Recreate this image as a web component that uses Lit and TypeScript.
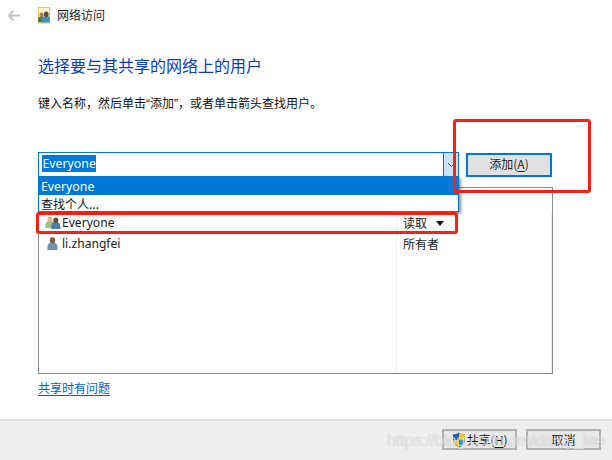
import { LitElement, html, css, svg } from "lit";
import { customElement } from "lit/decorators.js";

const person = (x: number, y: number, s: number, body: string, head: string) => svg`
  <g transform="translate(${x} ${y}) scale(${s})">
    <path d="M-4.6 11v-3c0-2.6 2-3.9 4.6-3.9s4.6 1.3 4.6 3.9v3z" fill="${body}"/>
    <ellipse cx="0" cy="2.3" rx="2.5" ry="2.9" fill="${head}"/>
  </g>`;

@customElement("app-root")
export class AppRoot extends LitElement {
  static styles = css`
    :host {
      display: flex;
      flex-direction: column;
      position: relative;
      width: 612px;
      height: 460px;
      overflow: hidden;
      background: #fff;
      font-family: "Noto Sans CJK SC", "Liberation Sans", sans-serif;
      font-size: 12px;
      color: #1a1a1a;
    }
    svg { display: block; flex: none; }
    .main { flex: 1; padding: 0 59px 0 38px; display: flex; flex-direction: column; }
    .titlebar { height: 30px; display: flex; align-items: center; margin-left: -30px; }
    .back { margin-right: 18px; }
    .ticon { margin-right: 7px; }
    .ttext { line-height: 16px; }
    h1 { margin: 25px 0 0; font-size: 16px; font-weight: 400; line-height: 20px; color: #0a3cc0; }
    .hint { margin-top: 19px; line-height: 18px; color: #111; white-space: nowrap; }
    .q { font-family: "Liberation Sans", sans-serif; }
    .row { margin-top: 39px; display: flex; gap: 7px; height: 25px; }
    .combo {
      position: relative;
      width: 421px;
      height: 25px;
      box-sizing: border-box;
      border: 1px solid #0078d7;
      background: #fff;
      display: flex;
      align-items: center;
    }
    .sel {
      margin: 0 0 2px 3px;
      background: #0078d7;
      color: #fff;
      font-family: "Noto Sans", "Liberation Sans", sans-serif;
      font-size: 12.3px;
      line-height: 17px;
      padding: 0 0.5px;
    }
    .arrow {
      margin-left: auto;
      width: 15px;
      height: 23px;
      box-sizing: border-box;
      border-left: 1px solid #0078d7;
      background: #cce4f7;
      display: flex;
      align-items: center;
      justify-content: center;
    }
    .drop {
      position: absolute;
      left: -1px;
      top: 23px;
      width: 421px;
      height: 36px;
      box-sizing: border-box;
      background: #fff;
      border: 1px solid #0078d7;
      border-top: none;
      box-shadow: 2px 2px 3px rgba(0, 0, 0, 0.45);
      z-index: 2;
    }
    .opt { height: 17px; line-height: 17px; padding-left: 2px; color: #111; }
    .opt.on {
      background: #0078d7;
      color: #fff;
      font-family: "Noto Sans", "Liberation Sans", sans-serif;
      font-size: 12.3px;
      height: 19px;
      line-height: 21px;
    }
    .btn-add {
      width: 86px;
      height: 24px;
      box-sizing: border-box;
      margin-top: 1px;
      padding-bottom: 2px;
      border: 2px solid #0078d7;
      background: #e1e1e1;
      display: flex;
      align-items: center;
      justify-content: center;
      line-height: 16px;
      color: #222;
    }
    u { text-underline-offset: 2px; }
    .list {
      margin-top: 10px;
      width: 515px;
      height: 187px;
      box-sizing: border-box;
      border: 1px solid #8b8f94;
      display: grid;
      grid-template-columns: 357px 1fr;
      grid-template-rows: 25px 20px 21px;
      align-content: start;
      position: relative;
    }
    .list::after {
      content: "";
      position: absolute;
      left: 357px;
      top: 26px;
      bottom: 0;
      width: 154px;
      border-left: 1px solid #eaf1fa;
      border-right: 1px solid #e6eefa;
      pointer-events: none;
    }
    .name {
      display: flex;
      align-items: center;
      gap: 1px;
      padding-left: 6px;
      font-family: "Noto Sans", "Liberation Sans", sans-serif;
      font-size: 12.1px;
      line-height: 20px;
      color: #1a1a1a;
    }
    .name.single { padding-left: 8px; gap: 4px; }
    .perm { display: flex; align-items: center; padding-left: 7px; line-height: 20px; }
    .caret {
      margin-left: 9px;
      width: 0;
      height: 0;
      border-left: 4.5px solid transparent;
      border-right: 4.5px solid transparent;
      border-top: 5px solid #111;
    }
    .link { margin-top: 5px; line-height: 17px; color: #0066cc; text-decoration: underline; text-underline-offset: 2px; width: fit-content; }
    .footer {
      height: 41px;
      box-sizing: border-box;
      border-top: 2px solid #dfdfdf;
      background: #eeeeee;
      display: flex;
      justify-content: flex-end;
      gap: 9px;
      padding: 8px 11px 0 0;
    }
    .btn {
      width: 75px;
      height: 21px;
      box-sizing: border-box;
      border: 2px solid #b2b2b2;
      background: #e8e8e8;
      display: flex;
      align-items: center;
      justify-content: center;
      gap: 1px;
      line-height: 16px;
      color: #111;
    }
    .mark {
      position: absolute;
      border: 3px solid #fb1f14;
      border-radius: 3px;
      box-sizing: border-box;
      z-index: 3;
    }
    .m1 { left: 453px; top: 119px; width: 138px; height: 74px; }
    .m2 { left: 36px; top: 212px; width: 422px; height: 22px; }
    .wm {
      position: absolute;
      left: 387px;
      top: 431px;
      font-family: "Liberation Sans", sans-serif;
      font-size: 17px;
      letter-spacing: -0.42px;
      line-height: 20px;
      color: rgba(255, 255, 255, 0.6);
      text-shadow: 0 0 1px rgba(120, 120, 120, 0.45);
      white-space: nowrap;
      z-index: 4;
    }
  `;

  render() {
    return html`
      <div class="main">
        <div class="titlebar">
          <svg class="back" width="12" height="11" viewBox="0 0 12 11">
            <path d="M5.5.8.9 5.5l4.6 4.7M1.2 5.5H12" fill="none" stroke="#c4c4c4" stroke-width="2"/>
          </svg>
          <svg class="ticon" width="12" height="17" viewBox="0 0 12 17">
            <rect x="0.5" y="0.5" width="11" height="15.5" fill="#fdf3c4" stroke="#e8c84e"/>
            ${person(3.6, 6, 0.85, "#4f7a45", "#a8825a")}
            ${person(8.2, 5, 0.95, "#3f8fbf", "#5f503e")}
          </svg>
          <span class="ttext">网络访问</span>
        </div>
        <h1>选择要与其共享的网络上的用户</h1>
        <div class="hint">键入名称，然后单击<span class="q">“</span>添加<span class="q">”</span>，或者单击箭头查找用户。</div>
        <div class="row">
          <div class="combo">
            <span class="sel">Everyone</span>
            <span class="arrow">
              <svg width="9" height="6" viewBox="0 0 9 6"><path d="M1 1l3.5 3.5L8 1" fill="none" stroke="#555" stroke-width="1"/></svg>
            </span>
            <div class="drop">
              <div class="opt on">Everyone</div>
              <div class="opt">查找个人...</div>
            </div>
          </div>
          <div class="btn-add"><span>添加(<u>A</u>)</span></div>
        </div>
        <div class="list">
          <div></div><div></div>
          <div class="name">
            <svg width="16" height="14" viewBox="0 0 16 14">
              ${person(5, 1, 1, "#94c082", "#dcb890")}
              ${person(10.8, 2, 1, "#4a7fa8", "#5f4e3e")}
            </svg>
            Everyone
          </div>
          <div class="perm">读取<span class="caret"></span></div>
          <div class="name single">
            <svg width="11" height="14" viewBox="0 0 11 14">
              ${person(5.5, 1, 1.08, "#6f93b3", "#7d5f44")}
            </svg>
            li.zhangfei
          </div>
          <div class="perm">所有者</div>
        </div>
        <div class="link">共享时有问题</div>
      </div>
      <div class="footer">
        <div class="btn">
          <svg width="14" height="16" viewBox="0 0 14 16">
            <path d="M7 .5C5 1.8 3 2.4 1 2.5v5c0 3.5 2.5 6.2 6 8 3.5-1.8 6-4.5 6-8v-5C11 2.4 9 1.8 7 .5z" fill="#1a5fb4"/>
            <path d="M7 .5C9 1.8 11 2.4 13 2.5V8H7z" fill="#f5c518"/>
            <path d="M7 8H1c.3 3.2 2.6 5.8 6 7.5z" fill="#f5c518"/>
            <path d="M7 8h6c-.3 3.2-2.6 5.8-6 7.5z" fill="#2f8fe0"/>
          </svg>
          <span>共享(<u>H</u>)</span>
        </div>
        <div class="btn">取消</div>
      </div>
      <div class="mark m1"></div>
      <div class="mark m2"></div>
      <div class="wm">https://blog.csdn.net/darcy_lee</div>
    `;
  }
}
